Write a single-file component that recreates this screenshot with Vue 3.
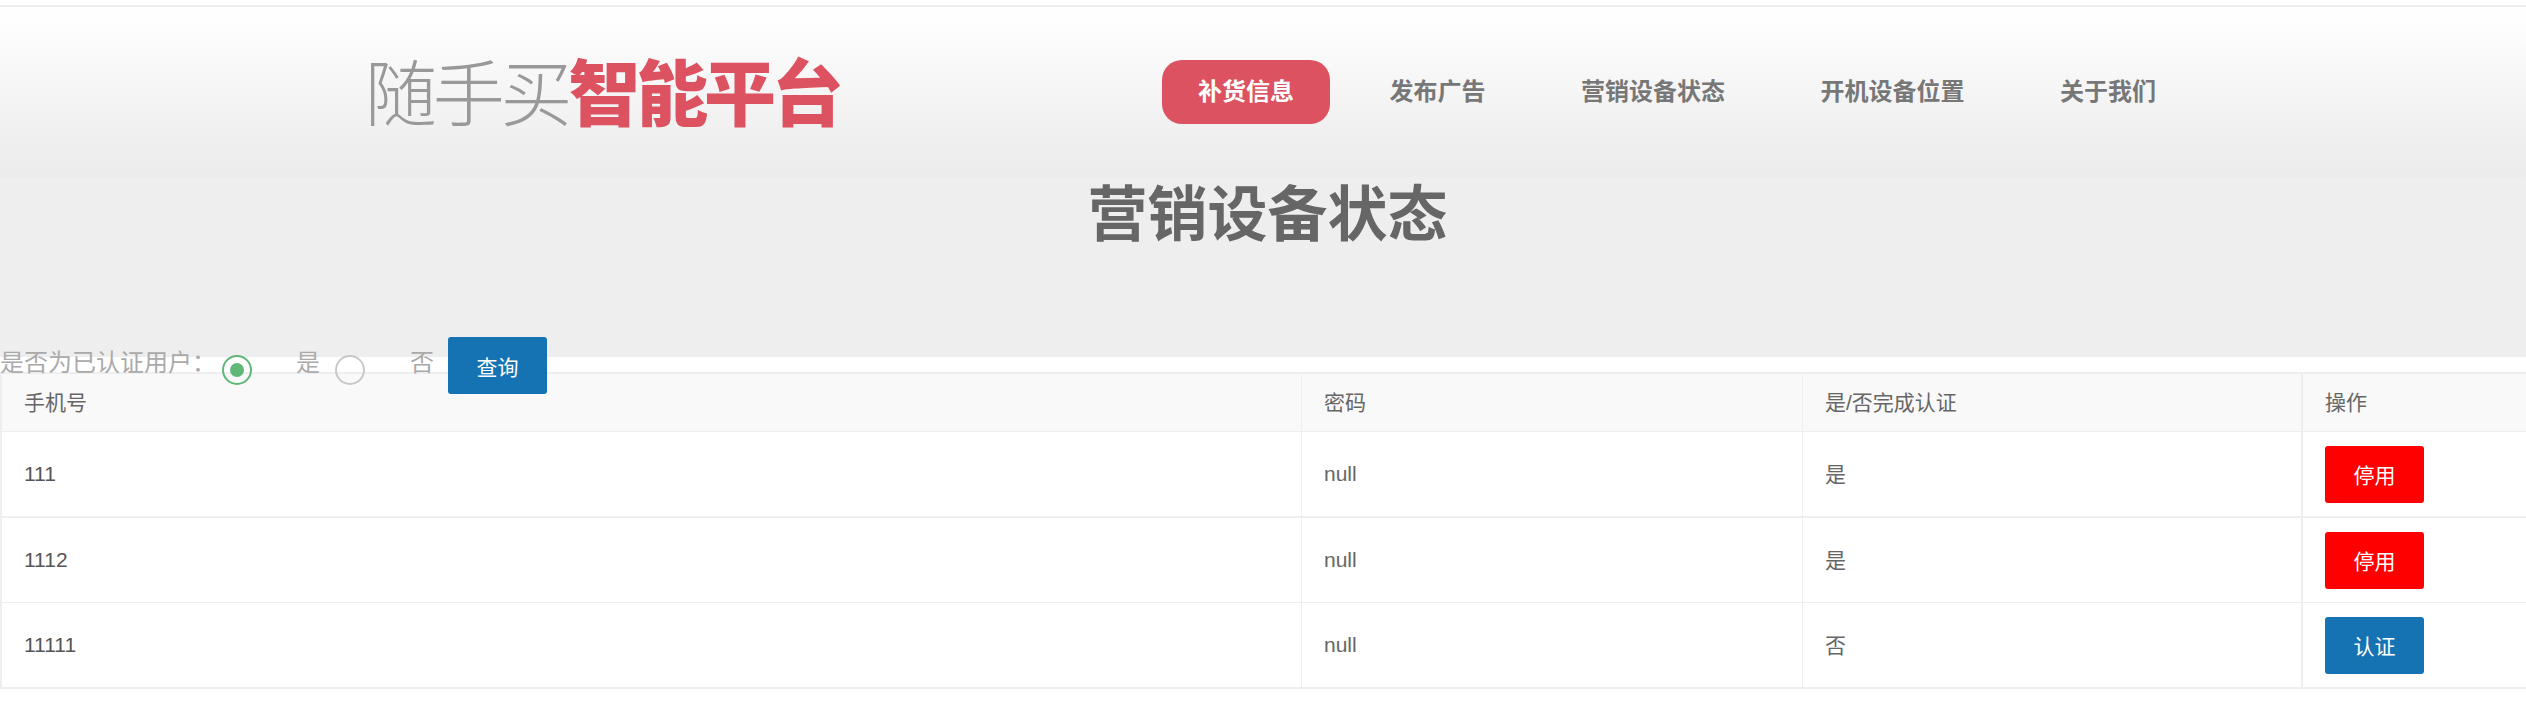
<script setup>
import { ref } from 'vue'

const navItems = ['补货信息', '发布广告', '营销设备状态', '开机设备位置', '关于我们']
const verified = ref('yes')

const users = [
  { id: 1, phone: '111', password: 'null', done: '是', action: '停用', danger: true },
  { id: 2, phone: '1112', password: 'null', done: '是', action: '停用', danger: true },
  { id: 3, phone: '11111', password: 'null', done: '否', action: '认证', danger: false }
]
</script>

<template>
  <div class="page">
    <header class="top">
      <div class="logo"><span class="logo-light">随手买</span><b>智能平台</b></div>
      <nav class="nav">
        <a
          v-for="(item, i) in navItems"
          :key="item"
          class="nav-item"
          :class="{ active: i === 0 }"
        >{{ item }}</a>
      </nav>
    </header>

    <section class="banner">
      <h1>营销设备状态</h1>
    </section>

    <form class="filter" @submit.prevent>
      <span class="filter-label">是否为已认证用户：</span>
      <label class="radio" @click="verified = 'yes'">
        <i class="circle" :class="{ on: verified === 'yes' }"></i>
        <span>是</span>
      </label>
      <label class="radio" @click="verified = 'no'">
        <i class="circle" :class="{ on: verified === 'no' }"></i>
        <span>否</span>
      </label>
      <button class="btn btn-blue">查询</button>
    </form>

    <table class="user-table">
      <colgroup>
        <col class="col-phone">
        <col class="col-password">
        <col class="col-done">
        <col class="col-action">
      </colgroup>
      <thead>
        <tr>
          <th>手机号</th>
          <th>密码</th>
          <th>是/否完成认证</th>
          <th>操作</th>
        </tr>
      </thead>
      <tbody>
        <tr v-for="user in users" :key="user.id">
          <td class="phone">{{ user.phone }}</td>
          <td>{{ user.password }}</td>
          <td class="done">{{ user.done }}</td>
          <td>
            <button class="btn" :class="user.danger ? 'btn-red' : 'btn-blue'">{{ user.action }}</button>
          </td>
        </tr>
      </tbody>
    </table>
  </div>
</template>

<style>
html, body {
  margin: 0;
  background: #fff;
  overflow: hidden;
}
</style>

<style scoped>
.page {
  width: 2526px;
  height: 725px;
  overflow: hidden;
  padding-top: 5px;
  box-sizing: border-box;
  font-family: "Liberation Sans", "Noto Sans CJK SC", sans-serif;
  font-size: 21px;
  color: #666;
}

.top {
  height: 170px;
  border-top: 2px solid #eee;
  background: linear-gradient(to bottom, #fff, #ebebeb);
  display: flex;
  align-items: flex-start;
  padding-left: 365px;
}

.logo {
  width: 797px;
  margin-top: 40px;
  font-size: 72px;
  line-height: 96px;
  letter-spacing: -4.2px;
  color: #dc5260;
  white-space: nowrap;
}

.logo-light {
  color: #999;
  font-weight: 300;
}

.logo b {
  font-weight: 900;
}

.nav {
  display: flex;
  gap: 23.5px;
  margin-top: 53px;
}

.nav-item {
  height: 64px;
  line-height: 64px;
  padding: 0 36px;
  border-radius: 20px;
  font-size: 24px;
  font-weight: 700;
  color: #777;
}

.nav-item.active {
  background: #dc5260;
  color: #fff;
}

.banner {
  height: 180px;
  background: #eee;
  text-align: center;
}

.banner h1 {
  margin: 0;
  padding-left: 9px;
  font-size: 60px;
  line-height: 78px;
  font-weight: 700;
  color: #666;
}

.filter {
  position: relative;
  z-index: 1;
  display: flex;
  align-items: flex-start;
  height: 57px;
  margin-top: -20px;
  font-size: 24px;
  color: #aaa;
}

.filter-label {
  width: 222px;
  line-height: 52px;
  white-space: nowrap;
}

.radio {
  display: flex;
  align-items: flex-start;
}

.radio span {
  line-height: 52px;
  margin-left: 44px;
  width: 39px;
}

.radio + .radio span {
  margin-left: 45px;
  width: 38px;
}

.circle {
  width: 30px;
  height: 30px;
  margin-top: 18px;
  box-sizing: border-box;
  border: 2px solid #c8c8c8;
  border-radius: 50%;
  display: flex;
  align-items: center;
  justify-content: center;
}

.circle.on {
  border-color: #5fb878;
}

.circle.on::after {
  content: "";
  width: 14px;
  height: 14px;
  border-radius: 50%;
  background: #5fb878;
}

.btn {
  width: 99px;
  height: 57px;
  padding: 0;
  border: 0;
  border-radius: 3px;
  font-family: inherit;
  font-size: 21px;
  color: #fff;
}

.btn-blue {
  background: #1673b3;
}

.btn-red {
  background: #f00;
}

.user-table {
  width: 2560px;
  margin-top: -22px;
  table-layout: fixed;
  border-collapse: separate;
  border-spacing: 0;
  border-top: 2px solid #eee;
}

.col-phone { width: 1301px; }
.col-password { width: 501px; }
.col-done { width: 499px; }
.col-action { width: 759px; }

.user-table th,
.user-table td {
  padding: 0 0 0 22px;
  border-left: 1px solid #eee;
  border-bottom: 1px solid #eee;
  text-align: left;
  font-weight: 400;
  box-sizing: border-box;
}

.user-table th:first-child,
.user-table td:first-child,
.user-table th:last-child,
.user-table td:last-child {
  border-left-width: 2px;
}

.user-table th {
  height: 58px;
  padding-bottom: 4px;
  background: #f9f9f9;
}

.user-table td.done {
  padding-bottom: 3px;
}

.user-table tbody tr:nth-child(1) td {
  height: 86px;
  border-bottom-width: 2px;
}

.user-table tbody tr:nth-child(2) td {
  height: 85px;
}

.user-table tbody tr:nth-child(3) td {
  height: 86px;
  border-bottom-width: 2px;
}

.user-table td .btn {
  display: block;
}

.phone {
  color: #555;
}
</style>
